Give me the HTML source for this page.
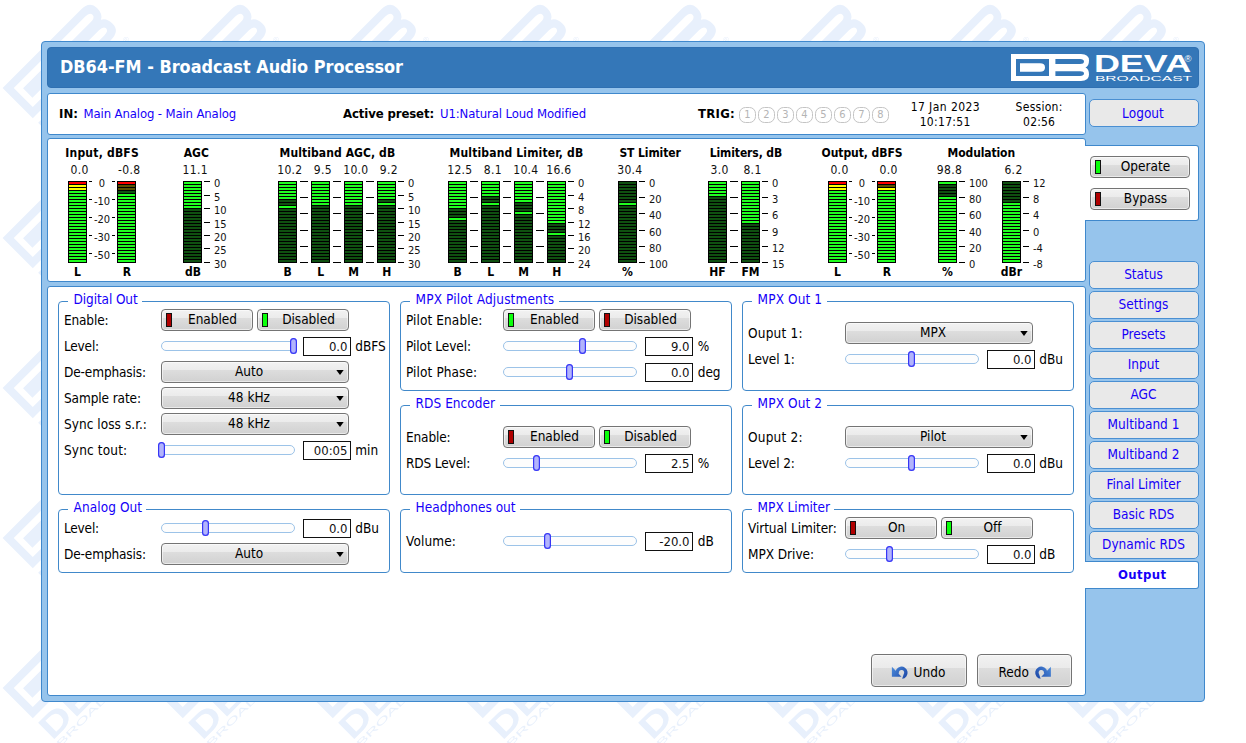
<!DOCTYPE html><html><head><meta charset="utf-8"><title>DB64-FM - Broadcast Audio Processor</title><style>
html,body{margin:0;padding:0;background:#fff}
#r{position:relative;width:1246px;height:743px;overflow:hidden;font-family:'DejaVu Sans Condensed','Liberation Sans',sans-serif;background:#fff}
#r div,#r b,#r span{position:absolute;box-sizing:border-box}
#r span{white-space:nowrap;line-height:20px;height:20px}
.pn{background:#fff;border:1px solid #3f88cc;border-radius:3px}
.tab{background:#fff;border:1px solid #3f88cc;border-left:none;border-radius:0 3px 3px 0}
.nv{width:110px;height:28px;background:#e9e9e9;border:1px solid #4a8fd2;border-radius:5px}
.fs{border:1px solid #4189ca;border-radius:4px}
.lg{height:5px;background:#fff}
.mt{width:19px;height:82px;background:#000}
.mt i{position:absolute;left:1px;width:17px;height:2px}
.tk{height:1px;background:#000}
.tr{width:17px;height:16px;border:1px solid #c4c4c4;border-radius:6.5px;background:#fff}
.bt{border:1px solid #747474;border-radius:4px;background:linear-gradient(#f2f2f2 0,#ebebeb 41%,#dddddd 42%,#d1d1d1 100%);box-shadow:inset 0 0 0 1px rgba(255,255,255,.55)}
.bt u{position:absolute;left:4px;top:3px;width:6px;height:14px;border:1px solid #111;box-sizing:border-box}
.bt s{position:absolute;right:4px;top:8px;width:8px;height:5px;background:#000;clip-path:polygon(0.3px 0,7.7px 0,4px 5px)}
.sl{width:134px;height:10px;border:1px solid #9cc3e8;border-radius:5px;background:#fdfdfd}
.sh{width:7px;height:16px;border-radius:3.5px;background:#b2b4fc;box-shadow:inset 0 0 0 1.2px #3636f6}
.ib{width:48px;height:19px;border:1px solid #111;background:#fff}
</style></head><body><div id="r"><svg style="position:absolute;left:0;top:0" width="1200" height="743" viewBox="0 0 1200 743"><defs><pattern id="wm" width="150" height="150" patternUnits="userSpaceOnUse"><g transform="translate(2.6,88) rotate(-45) scale(1.58)" fill="#e8f0fc"><path fill-rule="evenodd" d="M0,0H70Q78,0 78,6.5Q78,12 74.5,13.5Q78,15 78,20.5Q78,27 70,27H0ZM5,5V22H38V5ZM44.4,5V10H69Q73,10 73,7.5Q73,5 69,5ZM44.4,17.3V22H69Q73,22 73,19.6Q73,17.3 69,17.3Z"/><path d="M9,9.3H29Q34,9.3 34,13.5Q34,17.7 29,17.7H9Z"/><text x="-1.5" y="46" font-family="'Liberation Sans',sans-serif" font-weight="bold" font-size="21" textLength="76" lengthAdjust="spacingAndGlyphs">DEVA</text><text x="75" y="35.5" font-family="'Liberation Sans',sans-serif" font-size="5">®</text><text x="-1" y="52.3" font-family="'Liberation Sans',sans-serif" font-size="5.8" textLength="77" lengthAdjust="spacingAndGlyphs">BROADCAST</text></g></pattern></defs><rect width="1200" height="743" fill="url(#wm)"/></svg>
<div style="left:41px;top:41px;width:1164px;height:661px;background:#96c4ec;border:1px solid #3f88cc;border-radius:4px;box-sizing:border-box"></div>
<div style="left:47px;top:47px;width:1152px;height:41px;background:#3477b8;border:1px solid #2f70b2;border-radius:4px;box-sizing:border-box"></div>
<span style="top:57.12px;font-size:17px;font-weight:bold;color:#fff;left:60.0px;transform:scaleX(1.0506);transform-origin:0 0;">DB64-FM - Broadcast Audio Processor</span>
<svg style="position:absolute;left:1005px;top:48px" width="192" height="39" viewBox="1005 48 192 39"><g transform="translate(1011,54)" fill="#fff"><path fill-rule="evenodd" d="M0,0H70Q78,0 78,6.5Q78,12 74.5,13.5Q78,15 78,20.5Q78,27 70,27H0ZM5,5V22H38V5ZM44.4,5V10H69Q73,10 73,7.5Q73,5 69,5ZM44.4,17.3V22H69Q73,22 73,19.6Q73,17.3 69,17.3Z"/><path d="M9,9.3H29Q34,9.3 34,13.5Q34,17.7 29,17.7H9Z"/></g><text x="1093.9" y="72" fill="#fff" font-family="'Liberation Sans',sans-serif" font-weight="bold" font-size="24" textLength="97.3" lengthAdjust="spacingAndGlyphs">DEVA</text><text x="1184.5" y="62" fill="#fff" font-family="'Liberation Sans',sans-serif" font-size="9.5">®</text><text x="1094.9" y="80.8" fill="#fff" font-family="'Liberation Sans',sans-serif" font-size="6.4" textLength="97.3" lengthAdjust="spacingAndGlyphs">BROADCAST</text></svg>
<div class="pn" style="left:47px;top:93px;width:1039px;height:42px"></div>
<span style="top:103.50px;font-size:13px;font-weight:bold;letter-spacing:0.057px;left:59.0px;">IN:</span>
<span style="top:103.50px;font-size:13px;color:#1600f8;letter-spacing:-0.130px;left:83.6px;">Main Analog - Main Analog</span>
<span style="top:103.50px;font-size:13px;font-weight:bold;letter-spacing:-0.105px;left:343.0px;">Active preset:</span>
<span style="top:103.50px;font-size:13px;color:#1600f8;letter-spacing:-0.113px;left:440.0px;">U1:Natural Loud Modified</span>
<span style="top:103.50px;font-size:13px;font-weight:bold;letter-spacing:0.275px;left:698.0px;">TRIG:</span>
<div class="tr" style="left:739px;top:107px"></div>
<span style="top:105.19px;font-size:11px;color:#b4b4b4;left:747.5px;transform:translateX(-50%);">1</span>
<div class="tr" style="left:758px;top:107px"></div>
<span style="top:105.19px;font-size:11px;color:#b4b4b4;left:766.5px;transform:translateX(-50%);">2</span>
<div class="tr" style="left:777px;top:107px"></div>
<span style="top:105.19px;font-size:11px;color:#b4b4b4;left:785.5px;transform:translateX(-50%);">3</span>
<div class="tr" style="left:796px;top:107px"></div>
<span style="top:105.19px;font-size:11px;color:#b4b4b4;left:804.5px;transform:translateX(-50%);">4</span>
<div class="tr" style="left:815px;top:107px"></div>
<span style="top:105.19px;font-size:11px;color:#b4b4b4;left:823.5px;transform:translateX(-50%);">5</span>
<div class="tr" style="left:834px;top:107px"></div>
<span style="top:105.19px;font-size:11px;color:#b4b4b4;left:842.5px;transform:translateX(-50%);">6</span>
<div class="tr" style="left:853px;top:107px"></div>
<span style="top:105.19px;font-size:11px;color:#b4b4b4;left:861.5px;transform:translateX(-50%);">7</span>
<div class="tr" style="left:872px;top:107px"></div>
<span style="top:105.19px;font-size:11px;color:#b4b4b4;left:880.5px;transform:translateX(-50%);">8</span>
<span style="top:96.85px;font-size:12px;letter-spacing:0.436px;left:945.4px;transform:translateX(-50%);">17 Jan 2023</span>
<span style="top:111.85px;font-size:12px;letter-spacing:0.314px;left:945.2px;transform:translateX(-50%);">10:17:51</span>
<span style="top:96.85px;font-size:12px;letter-spacing:0.270px;left:1039.1px;transform:translateX(-50%);">Session:</span>
<span style="top:111.85px;font-size:12px;letter-spacing:0.178px;left:1039.1px;transform:translateX(-50%);">02:56</span>
<div class="nv" style="left:1089px;top:99px"></div>
<span style="top:103.33px;font-size:13.5px;color:#1600f8;letter-spacing:0.040px;left:1143.0px;transform:translateX(-50%);">Logout</span>
<div class="pn" style="left:47px;top:138px;width:1039px;height:144px"></div>
<div class="tab" style="left:1085px;top:145px;width:114px;height:76px"></div>
<div class="bt" style="left:1090px;top:156px;width:100px;height:22px"><u style="background:#0aff0a"></u></div>
<span style="top:156.33px;font-size:13.5px;letter-spacing:-0.007px;left:1145.5px;transform:translateX(-50%);">Operate</span>
<div class="bt" style="left:1090px;top:188px;width:100px;height:22px"><u style="background:#b00000"></u></div>
<span style="top:188.33px;font-size:13.5px;letter-spacing:-0.007px;left:1145.5px;transform:translateX(-50%);">Bypass</span>
<span style="top:142.85px;font-size:12px;font-weight:bold;letter-spacing:0.223px;left:102.1px;transform:translateX(-50%);">Input, dBFS</span>
<span style="top:159.85px;font-size:12px;color:#111;letter-spacing:0.330px;left:79.7px;transform:translateX(-50%);">0.0</span>
<span style="top:159.85px;font-size:12px;color:#111;letter-spacing:0.330px;left:129.2px;transform:translateX(-50%);">-0.8</span>
<div class="mt" style="left:68px;top:181px"><i style="top:1px;background:#ff0000"></i><i style="top:4px;background:#ffff00"></i><i style="top:7px;background:#ffff00"></i><i style="top:10px;background:#20ff20"></i><i style="top:13px;background:#20ff20"></i><i style="top:16px;background:#20ff20"></i><i style="top:19px;background:#20ff20"></i><i style="top:22px;background:#20ff20"></i><i style="top:25px;background:#20ff20"></i><i style="top:28px;background:#20ff20"></i><i style="top:31px;background:#20ff20"></i><i style="top:34px;background:#20ff20"></i><i style="top:37px;background:#20ff20"></i><i style="top:40px;background:#20ff20"></i><i style="top:43px;background:#20ff20"></i><i style="top:46px;background:#20ff20"></i><i style="top:49px;background:#20ff20"></i><i style="top:52px;background:#20ff20"></i><i style="top:55px;background:#20ff20"></i><i style="top:58px;background:#20ff20"></i><i style="top:61px;background:#20ff20"></i><i style="top:64px;background:#20ff20"></i><i style="top:67px;background:#20ff20"></i><i style="top:70px;background:#20ff20"></i><i style="top:73px;background:#20ff20"></i><i style="top:76px;background:#20ff20"></i><i style="top:79px;background:#20ff20"></i></div>
<div class="mt" style="left:117px;top:181px"><i style="top:1px;background:#ff0000"></i><i style="top:4px;background:#5a5000"></i><i style="top:7px;background:#5a5000"></i><i style="top:10px;background:#0f5010"></i><i style="top:13px;background:#20ff20"></i><i style="top:16px;background:#20ff20"></i><i style="top:19px;background:#20ff20"></i><i style="top:22px;background:#20ff20"></i><i style="top:25px;background:#20ff20"></i><i style="top:28px;background:#20ff20"></i><i style="top:31px;background:#20ff20"></i><i style="top:34px;background:#20ff20"></i><i style="top:37px;background:#20ff20"></i><i style="top:40px;background:#20ff20"></i><i style="top:43px;background:#20ff20"></i><i style="top:46px;background:#20ff20"></i><i style="top:49px;background:#20ff20"></i><i style="top:52px;background:#20ff20"></i><i style="top:55px;background:#20ff20"></i><i style="top:58px;background:#20ff20"></i><i style="top:61px;background:#20ff20"></i><i style="top:64px;background:#20ff20"></i><i style="top:67px;background:#20ff20"></i><i style="top:70px;background:#20ff20"></i><i style="top:73px;background:#20ff20"></i><i style="top:76px;background:#20ff20"></i><i style="top:79px;background:#20ff20"></i></div>
<b class="tk" style="left:89px;top:181px;width:3px"></b>
<b class="tk" style="left:89px;top:199px;width:3px"></b>
<b class="tk" style="left:89px;top:217px;width:3px"></b>
<b class="tk" style="left:89px;top:235px;width:3px"></b>
<b class="tk" style="left:89px;top:253px;width:3px"></b>
<b class="tk" style="left:112px;top:181px;width:3px"></b>
<b class="tk" style="left:112px;top:199px;width:3px"></b>
<b class="tk" style="left:112px;top:217px;width:3px"></b>
<b class="tk" style="left:112px;top:235px;width:3px"></b>
<b class="tk" style="left:112px;top:253px;width:3px"></b>
<span style="top:174.19px;font-size:11px;color:#111;left:102.0px;transform:translateX(-50%);">0</span>
<span style="top:192.19px;font-size:11px;color:#111;left:102.0px;transform:translateX(-50%);">-10</span>
<span style="top:210.19px;font-size:11px;color:#111;left:102.0px;transform:translateX(-50%);">-20</span>
<span style="top:228.19px;font-size:11px;color:#111;left:102.0px;transform:translateX(-50%);">-30</span>
<span style="top:246.19px;font-size:11px;color:#111;left:102.0px;transform:translateX(-50%);">-50</span>
<span style="top:261.85px;font-size:12px;font-weight:bold;letter-spacing:0.009px;left:77.5px;transform:translateX(-50%);">L</span>
<span style="top:261.85px;font-size:12px;font-weight:bold;letter-spacing:0.009px;left:127.0px;transform:translateX(-50%);">R</span>
<span style="top:142.85px;font-size:12px;font-weight:bold;letter-spacing:-0.047px;left:183.8px;">AGC</span>
<span style="top:159.85px;font-size:12px;color:#111;letter-spacing:0.330px;left:195.2px;transform:translateX(-50%);">11.1</span>
<div class="mt" style="left:183px;top:181px"><i style="top:1px;background:#20ff20"></i><i style="top:4px;background:#20ff20"></i><i style="top:7px;background:#20ff20"></i><i style="top:10px;background:#20ff20"></i><i style="top:13px;background:#20ff20"></i><i style="top:16px;background:#20ff20"></i><i style="top:19px;background:#20ff20"></i><i style="top:22px;background:#20ff20"></i><i style="top:25px;background:#20ff20"></i><i style="top:28px;background:#0f5010"></i><i style="top:31px;background:#0f5010"></i><i style="top:34px;background:#0f5010"></i><i style="top:37px;background:#0f5010"></i><i style="top:40px;background:#0f5010"></i><i style="top:43px;background:#0f5010"></i><i style="top:46px;background:#0f5010"></i><i style="top:49px;background:#0f5010"></i><i style="top:52px;background:#0f5010"></i><i style="top:55px;background:#0f5010"></i><i style="top:58px;background:#0f5010"></i><i style="top:61px;background:#0f5010"></i><i style="top:64px;background:#0f5010"></i><i style="top:67px;background:#0f5010"></i><i style="top:70px;background:#0f5010"></i><i style="top:73px;background:#0f5010"></i><i style="top:76px;background:#0f5010"></i><i style="top:79px;background:#0f5010"></i></div>
<b class="tk" style="left:204px;top:181px;width:6px"></b>
<b class="tk" style="left:204px;top:195px;width:6px"></b>
<b class="tk" style="left:204px;top:208px;width:6px"></b>
<b class="tk" style="left:204px;top:222px;width:6px"></b>
<b class="tk" style="left:204px;top:235px;width:6px"></b>
<b class="tk" style="left:204px;top:248px;width:6px"></b>
<b class="tk" style="left:204px;top:262px;width:6px"></b>
<span style="top:174.19px;font-size:11px;color:#111;left:214.0px;">0</span>
<span style="top:188.19px;font-size:11px;color:#111;left:214.0px;">5</span>
<span style="top:201.19px;font-size:11px;color:#111;left:214.0px;">10</span>
<span style="top:215.19px;font-size:11px;color:#111;left:214.0px;">15</span>
<span style="top:228.19px;font-size:11px;color:#111;left:214.0px;">20</span>
<span style="top:241.19px;font-size:11px;color:#111;left:214.0px;">25</span>
<span style="top:255.19px;font-size:11px;color:#111;left:214.0px;">30</span>
<span style="top:261.85px;font-size:12px;font-weight:bold;letter-spacing:0.009px;left:193.0px;transform:translateX(-50%);">dB</span>
<span style="top:142.85px;font-size:12px;font-weight:bold;letter-spacing:0.087px;left:279.6px;">Multiband AGC, dB</span>
<span style="top:159.85px;font-size:12px;color:#111;letter-spacing:0.330px;left:289.9px;transform:translateX(-50%);">10.2</span>
<div class="mt" style="left:278px;top:181px"><i style="top:1px;background:#20ff20"></i><i style="top:4px;background:#20ff20"></i><i style="top:7px;background:#20ff20"></i><i style="top:10px;background:#20ff20"></i><i style="top:13px;background:#20ff20"></i><i style="top:16px;background:#20ff20"></i><i style="top:19px;background:#0f5010"></i><i style="top:22px;background:#0f5010"></i><i style="top:25px;background:#20ff20"></i><i style="top:28px;background:#0f5010"></i><i style="top:31px;background:#0f5010"></i><i style="top:34px;background:#0f5010"></i><i style="top:37px;background:#0f5010"></i><i style="top:40px;background:#0f5010"></i><i style="top:43px;background:#0f5010"></i><i style="top:46px;background:#0f5010"></i><i style="top:49px;background:#0f5010"></i><i style="top:52px;background:#0f5010"></i><i style="top:55px;background:#0f5010"></i><i style="top:58px;background:#0f5010"></i><i style="top:61px;background:#0f5010"></i><i style="top:64px;background:#0f5010"></i><i style="top:67px;background:#0f5010"></i><i style="top:70px;background:#0f5010"></i><i style="top:73px;background:#0f5010"></i><i style="top:76px;background:#0f5010"></i><i style="top:79px;background:#0f5010"></i></div>
<span style="top:261.85px;font-size:12px;font-weight:bold;letter-spacing:0.009px;left:287.7px;transform:translateX(-50%);">B</span>
<b class="tk" style="left:300px;top:181px;width:8px"></b>
<b class="tk" style="left:300px;top:197px;width:8px"></b>
<b class="tk" style="left:300px;top:213px;width:8px"></b>
<b class="tk" style="left:300px;top:230px;width:8px"></b>
<b class="tk" style="left:300px;top:246px;width:8px"></b>
<b class="tk" style="left:300px;top:262px;width:8px"></b>
<span style="top:159.85px;font-size:12px;color:#111;letter-spacing:0.330px;left:322.9px;transform:translateX(-50%);">9.5</span>
<div class="mt" style="left:311px;top:181px"><i style="top:1px;background:#20ff20"></i><i style="top:4px;background:#20ff20"></i><i style="top:7px;background:#20ff20"></i><i style="top:10px;background:#20ff20"></i><i style="top:13px;background:#20ff20"></i><i style="top:16px;background:#20ff20"></i><i style="top:19px;background:#20ff20"></i><i style="top:22px;background:#20ff20"></i><i style="top:25px;background:#0f5010"></i><i style="top:28px;background:#0f5010"></i><i style="top:31px;background:#0f5010"></i><i style="top:34px;background:#0f5010"></i><i style="top:37px;background:#0f5010"></i><i style="top:40px;background:#0f5010"></i><i style="top:43px;background:#0f5010"></i><i style="top:46px;background:#0f5010"></i><i style="top:49px;background:#0f5010"></i><i style="top:52px;background:#0f5010"></i><i style="top:55px;background:#0f5010"></i><i style="top:58px;background:#0f5010"></i><i style="top:61px;background:#0f5010"></i><i style="top:64px;background:#0f5010"></i><i style="top:67px;background:#0f5010"></i><i style="top:70px;background:#0f5010"></i><i style="top:73px;background:#0f5010"></i><i style="top:76px;background:#0f5010"></i><i style="top:79px;background:#0f5010"></i></div>
<span style="top:261.85px;font-size:12px;font-weight:bold;letter-spacing:0.009px;left:320.7px;transform:translateX(-50%);">L</span>
<b class="tk" style="left:333px;top:181px;width:8px"></b>
<b class="tk" style="left:333px;top:197px;width:8px"></b>
<b class="tk" style="left:333px;top:213px;width:8px"></b>
<b class="tk" style="left:333px;top:230px;width:8px"></b>
<b class="tk" style="left:333px;top:246px;width:8px"></b>
<b class="tk" style="left:333px;top:262px;width:8px"></b>
<span style="top:159.85px;font-size:12px;color:#111;letter-spacing:0.330px;left:355.9px;transform:translateX(-50%);">10.0</span>
<div class="mt" style="left:344px;top:181px"><i style="top:1px;background:#20ff20"></i><i style="top:4px;background:#20ff20"></i><i style="top:7px;background:#20ff20"></i><i style="top:10px;background:#20ff20"></i><i style="top:13px;background:#20ff20"></i><i style="top:16px;background:#20ff20"></i><i style="top:19px;background:#20ff20"></i><i style="top:22px;background:#20ff20"></i><i style="top:25px;background:#0f5010"></i><i style="top:28px;background:#0f5010"></i><i style="top:31px;background:#0f5010"></i><i style="top:34px;background:#0f5010"></i><i style="top:37px;background:#0f5010"></i><i style="top:40px;background:#0f5010"></i><i style="top:43px;background:#0f5010"></i><i style="top:46px;background:#0f5010"></i><i style="top:49px;background:#0f5010"></i><i style="top:52px;background:#0f5010"></i><i style="top:55px;background:#0f5010"></i><i style="top:58px;background:#0f5010"></i><i style="top:61px;background:#0f5010"></i><i style="top:64px;background:#0f5010"></i><i style="top:67px;background:#0f5010"></i><i style="top:70px;background:#0f5010"></i><i style="top:73px;background:#0f5010"></i><i style="top:76px;background:#0f5010"></i><i style="top:79px;background:#0f5010"></i></div>
<span style="top:261.85px;font-size:12px;font-weight:bold;letter-spacing:0.009px;left:353.7px;transform:translateX(-50%);">M</span>
<b class="tk" style="left:366px;top:181px;width:8px"></b>
<b class="tk" style="left:366px;top:197px;width:8px"></b>
<b class="tk" style="left:366px;top:213px;width:8px"></b>
<b class="tk" style="left:366px;top:230px;width:8px"></b>
<b class="tk" style="left:366px;top:246px;width:8px"></b>
<b class="tk" style="left:366px;top:262px;width:8px"></b>
<span style="top:159.85px;font-size:12px;color:#111;letter-spacing:0.330px;left:388.9px;transform:translateX(-50%);">9.2</span>
<div class="mt" style="left:377px;top:181px"><i style="top:1px;background:#20ff20"></i><i style="top:4px;background:#20ff20"></i><i style="top:7px;background:#20ff20"></i><i style="top:10px;background:#20ff20"></i><i style="top:13px;background:#20ff20"></i><i style="top:16px;background:#20ff20"></i><i style="top:19px;background:#0f5010"></i><i style="top:22px;background:#20ff20"></i><i style="top:25px;background:#0f5010"></i><i style="top:28px;background:#0f5010"></i><i style="top:31px;background:#0f5010"></i><i style="top:34px;background:#0f5010"></i><i style="top:37px;background:#0f5010"></i><i style="top:40px;background:#0f5010"></i><i style="top:43px;background:#0f5010"></i><i style="top:46px;background:#0f5010"></i><i style="top:49px;background:#0f5010"></i><i style="top:52px;background:#0f5010"></i><i style="top:55px;background:#0f5010"></i><i style="top:58px;background:#0f5010"></i><i style="top:61px;background:#0f5010"></i><i style="top:64px;background:#0f5010"></i><i style="top:67px;background:#0f5010"></i><i style="top:70px;background:#0f5010"></i><i style="top:73px;background:#0f5010"></i><i style="top:76px;background:#0f5010"></i><i style="top:79px;background:#0f5010"></i></div>
<span style="top:261.85px;font-size:12px;font-weight:bold;letter-spacing:0.009px;left:386.7px;transform:translateX(-50%);">H</span>
<b class="tk" style="left:398px;top:181px;width:6px"></b>
<b class="tk" style="left:398px;top:195px;width:6px"></b>
<b class="tk" style="left:398px;top:208px;width:6px"></b>
<b class="tk" style="left:398px;top:222px;width:6px"></b>
<b class="tk" style="left:398px;top:235px;width:6px"></b>
<b class="tk" style="left:398px;top:248px;width:6px"></b>
<b class="tk" style="left:398px;top:262px;width:6px"></b>
<span style="top:174.19px;font-size:11px;color:#111;left:408.0px;">0</span>
<span style="top:188.19px;font-size:11px;color:#111;left:408.0px;">5</span>
<span style="top:201.19px;font-size:11px;color:#111;left:408.0px;">10</span>
<span style="top:215.19px;font-size:11px;color:#111;left:408.0px;">15</span>
<span style="top:228.19px;font-size:11px;color:#111;left:408.0px;">20</span>
<span style="top:241.19px;font-size:11px;color:#111;left:408.0px;">25</span>
<span style="top:255.19px;font-size:11px;color:#111;left:408.0px;">30</span>
<span style="top:142.85px;font-size:12px;font-weight:bold;letter-spacing:0.149px;left:449.6px;">Multiband Limiter, dB</span>
<span style="top:159.85px;font-size:12px;color:#111;letter-spacing:0.330px;left:459.9px;transform:translateX(-50%);">12.5</span>
<div class="mt" style="left:448px;top:181px"><i style="top:1px;background:#20ff20"></i><i style="top:4px;background:#20ff20"></i><i style="top:7px;background:#20ff20"></i><i style="top:10px;background:#20ff20"></i><i style="top:13px;background:#20ff20"></i><i style="top:16px;background:#20ff20"></i><i style="top:19px;background:#20ff20"></i><i style="top:22px;background:#20ff20"></i><i style="top:25px;background:#20ff20"></i><i style="top:28px;background:#0f5010"></i><i style="top:31px;background:#0f5010"></i><i style="top:34px;background:#0f5010"></i><i style="top:37px;background:#20ff20"></i><i style="top:40px;background:#0f5010"></i><i style="top:43px;background:#0f5010"></i><i style="top:46px;background:#0f5010"></i><i style="top:49px;background:#0f5010"></i><i style="top:52px;background:#0f5010"></i><i style="top:55px;background:#0f5010"></i><i style="top:58px;background:#0f5010"></i><i style="top:61px;background:#0f5010"></i><i style="top:64px;background:#0f5010"></i><i style="top:67px;background:#0f5010"></i><i style="top:70px;background:#0f5010"></i><i style="top:73px;background:#0f5010"></i><i style="top:76px;background:#0f5010"></i><i style="top:79px;background:#0f5010"></i></div>
<span style="top:261.85px;font-size:12px;font-weight:bold;letter-spacing:0.009px;left:457.7px;transform:translateX(-50%);">B</span>
<b class="tk" style="left:470px;top:181px;width:8px"></b>
<b class="tk" style="left:470px;top:197px;width:8px"></b>
<b class="tk" style="left:470px;top:213px;width:8px"></b>
<b class="tk" style="left:470px;top:230px;width:8px"></b>
<b class="tk" style="left:470px;top:246px;width:8px"></b>
<b class="tk" style="left:470px;top:262px;width:8px"></b>
<span style="top:159.85px;font-size:12px;color:#111;letter-spacing:0.330px;left:492.9px;transform:translateX(-50%);">8.1</span>
<div class="mt" style="left:481px;top:181px"><i style="top:1px;background:#20ff20"></i><i style="top:4px;background:#20ff20"></i><i style="top:7px;background:#20ff20"></i><i style="top:10px;background:#20ff20"></i><i style="top:13px;background:#20ff20"></i><i style="top:16px;background:#0f5010"></i><i style="top:19px;background:#0f5010"></i><i style="top:22px;background:#20ff20"></i><i style="top:25px;background:#0f5010"></i><i style="top:28px;background:#0f5010"></i><i style="top:31px;background:#0f5010"></i><i style="top:34px;background:#0f5010"></i><i style="top:37px;background:#0f5010"></i><i style="top:40px;background:#0f5010"></i><i style="top:43px;background:#0f5010"></i><i style="top:46px;background:#0f5010"></i><i style="top:49px;background:#0f5010"></i><i style="top:52px;background:#0f5010"></i><i style="top:55px;background:#0f5010"></i><i style="top:58px;background:#0f5010"></i><i style="top:61px;background:#0f5010"></i><i style="top:64px;background:#0f5010"></i><i style="top:67px;background:#0f5010"></i><i style="top:70px;background:#0f5010"></i><i style="top:73px;background:#0f5010"></i><i style="top:76px;background:#0f5010"></i><i style="top:79px;background:#0f5010"></i></div>
<span style="top:261.85px;font-size:12px;font-weight:bold;letter-spacing:0.009px;left:490.7px;transform:translateX(-50%);">L</span>
<b class="tk" style="left:503px;top:181px;width:8px"></b>
<b class="tk" style="left:503px;top:197px;width:8px"></b>
<b class="tk" style="left:503px;top:213px;width:8px"></b>
<b class="tk" style="left:503px;top:230px;width:8px"></b>
<b class="tk" style="left:503px;top:246px;width:8px"></b>
<b class="tk" style="left:503px;top:262px;width:8px"></b>
<span style="top:159.85px;font-size:12px;color:#111;letter-spacing:0.330px;left:525.9px;transform:translateX(-50%);">10.4</span>
<div class="mt" style="left:514px;top:181px"><i style="top:1px;background:#20ff20"></i><i style="top:4px;background:#20ff20"></i><i style="top:7px;background:#20ff20"></i><i style="top:10px;background:#20ff20"></i><i style="top:13px;background:#20ff20"></i><i style="top:16px;background:#20ff20"></i><i style="top:19px;background:#20ff20"></i><i style="top:22px;background:#0f5010"></i><i style="top:25px;background:#0f5010"></i><i style="top:28px;background:#0f5010"></i><i style="top:31px;background:#20ff20"></i><i style="top:34px;background:#0f5010"></i><i style="top:37px;background:#0f5010"></i><i style="top:40px;background:#0f5010"></i><i style="top:43px;background:#0f5010"></i><i style="top:46px;background:#0f5010"></i><i style="top:49px;background:#0f5010"></i><i style="top:52px;background:#0f5010"></i><i style="top:55px;background:#0f5010"></i><i style="top:58px;background:#0f5010"></i><i style="top:61px;background:#0f5010"></i><i style="top:64px;background:#0f5010"></i><i style="top:67px;background:#0f5010"></i><i style="top:70px;background:#0f5010"></i><i style="top:73px;background:#0f5010"></i><i style="top:76px;background:#0f5010"></i><i style="top:79px;background:#0f5010"></i></div>
<span style="top:261.85px;font-size:12px;font-weight:bold;letter-spacing:0.009px;left:523.7px;transform:translateX(-50%);">M</span>
<b class="tk" style="left:536px;top:181px;width:8px"></b>
<b class="tk" style="left:536px;top:197px;width:8px"></b>
<b class="tk" style="left:536px;top:213px;width:8px"></b>
<b class="tk" style="left:536px;top:230px;width:8px"></b>
<b class="tk" style="left:536px;top:246px;width:8px"></b>
<b class="tk" style="left:536px;top:262px;width:8px"></b>
<span style="top:159.85px;font-size:12px;color:#111;letter-spacing:0.330px;left:558.9px;transform:translateX(-50%);">16.6</span>
<div class="mt" style="left:547px;top:181px"><i style="top:1px;background:#20ff20"></i><i style="top:4px;background:#20ff20"></i><i style="top:7px;background:#20ff20"></i><i style="top:10px;background:#20ff20"></i><i style="top:13px;background:#20ff20"></i><i style="top:16px;background:#20ff20"></i><i style="top:19px;background:#20ff20"></i><i style="top:22px;background:#20ff20"></i><i style="top:25px;background:#20ff20"></i><i style="top:28px;background:#20ff20"></i><i style="top:31px;background:#20ff20"></i><i style="top:34px;background:#20ff20"></i><i style="top:37px;background:#20ff20"></i><i style="top:40px;background:#20ff20"></i><i style="top:43px;background:#0f5010"></i><i style="top:46px;background:#0f5010"></i><i style="top:49px;background:#0f5010"></i><i style="top:52px;background:#20ff20"></i><i style="top:55px;background:#0f5010"></i><i style="top:58px;background:#0f5010"></i><i style="top:61px;background:#0f5010"></i><i style="top:64px;background:#0f5010"></i><i style="top:67px;background:#0f5010"></i><i style="top:70px;background:#0f5010"></i><i style="top:73px;background:#0f5010"></i><i style="top:76px;background:#0f5010"></i><i style="top:79px;background:#0f5010"></i></div>
<span style="top:261.85px;font-size:12px;font-weight:bold;letter-spacing:0.009px;left:556.7px;transform:translateX(-50%);">H</span>
<b class="tk" style="left:568px;top:181px;width:6px"></b>
<b class="tk" style="left:568px;top:195px;width:6px"></b>
<b class="tk" style="left:568px;top:208px;width:6px"></b>
<b class="tk" style="left:568px;top:222px;width:6px"></b>
<b class="tk" style="left:568px;top:235px;width:6px"></b>
<b class="tk" style="left:568px;top:248px;width:6px"></b>
<b class="tk" style="left:568px;top:262px;width:6px"></b>
<span style="top:174.19px;font-size:11px;color:#111;left:578.0px;">0</span>
<span style="top:188.19px;font-size:11px;color:#111;left:578.0px;">4</span>
<span style="top:201.19px;font-size:11px;color:#111;left:578.0px;">8</span>
<span style="top:215.19px;font-size:11px;color:#111;left:578.0px;">12</span>
<span style="top:228.19px;font-size:11px;color:#111;left:578.0px;">16</span>
<span style="top:241.19px;font-size:11px;color:#111;left:578.0px;">20</span>
<span style="top:255.19px;font-size:11px;color:#111;left:578.0px;">24</span>
<span style="top:142.85px;font-size:12px;font-weight:bold;letter-spacing:-0.083px;left:619.4px;">ST Limiter</span>
<span style="top:159.85px;font-size:12px;color:#111;letter-spacing:0.330px;left:629.9px;transform:translateX(-50%);">30.4</span>
<div class="mt" style="left:618px;top:181px"><i style="top:1px;background:#0f5010"></i><i style="top:4px;background:#0f5010"></i><i style="top:7px;background:#0f5010"></i><i style="top:10px;background:#0f5010"></i><i style="top:13px;background:#0f5010"></i><i style="top:16px;background:#0f5010"></i><i style="top:19px;background:#0f5010"></i><i style="top:22px;background:#20ff20"></i><i style="top:25px;background:#0f5010"></i><i style="top:28px;background:#0f5010"></i><i style="top:31px;background:#0f5010"></i><i style="top:34px;background:#0f5010"></i><i style="top:37px;background:#0f5010"></i><i style="top:40px;background:#0f5010"></i><i style="top:43px;background:#0f5010"></i><i style="top:46px;background:#0f5010"></i><i style="top:49px;background:#0f5010"></i><i style="top:52px;background:#0f5010"></i><i style="top:55px;background:#0f5010"></i><i style="top:58px;background:#0f5010"></i><i style="top:61px;background:#0f5010"></i><i style="top:64px;background:#0f5010"></i><i style="top:67px;background:#0f5010"></i><i style="top:70px;background:#0f5010"></i><i style="top:73px;background:#0f5010"></i><i style="top:76px;background:#0f5010"></i><i style="top:79px;background:#0f5010"></i></div>
<b class="tk" style="left:639px;top:181px;width:6px"></b>
<b class="tk" style="left:639px;top:197px;width:6px"></b>
<b class="tk" style="left:639px;top:213px;width:6px"></b>
<b class="tk" style="left:639px;top:230px;width:6px"></b>
<b class="tk" style="left:639px;top:246px;width:6px"></b>
<b class="tk" style="left:639px;top:262px;width:6px"></b>
<span style="top:174.19px;font-size:11px;color:#111;left:649.0px;">0</span>
<span style="top:190.19px;font-size:11px;color:#111;left:649.0px;">20</span>
<span style="top:206.19px;font-size:11px;color:#111;left:649.0px;">40</span>
<span style="top:223.19px;font-size:11px;color:#111;left:649.0px;">60</span>
<span style="top:239.19px;font-size:11px;color:#111;left:649.0px;">80</span>
<span style="top:255.19px;font-size:11px;color:#111;left:649.0px;">100</span>
<span style="top:261.85px;font-size:12px;font-weight:bold;letter-spacing:0.009px;left:627.5px;transform:translateX(-50%);">%</span>
<span style="top:142.85px;font-size:12px;font-weight:bold;letter-spacing:-0.098px;left:709.7px;">Limiters, dB</span>
<span style="top:159.85px;font-size:12px;color:#111;letter-spacing:0.330px;left:719.7px;transform:translateX(-50%);">3.0</span>
<span style="top:159.85px;font-size:12px;color:#111;letter-spacing:0.330px;left:752.5px;transform:translateX(-50%);">8.1</span>
<div class="mt" style="left:708px;top:181px"><i style="top:1px;background:#20ff20"></i><i style="top:4px;background:#20ff20"></i><i style="top:7px;background:#20ff20"></i><i style="top:10px;background:#20ff20"></i><i style="top:13px;background:#20ff20"></i><i style="top:16px;background:#0f5010"></i><i style="top:19px;background:#0f5010"></i><i style="top:22px;background:#0f5010"></i><i style="top:25px;background:#0f5010"></i><i style="top:28px;background:#0f5010"></i><i style="top:31px;background:#0f5010"></i><i style="top:34px;background:#0f5010"></i><i style="top:37px;background:#0f5010"></i><i style="top:40px;background:#0f5010"></i><i style="top:43px;background:#0f5010"></i><i style="top:46px;background:#0f5010"></i><i style="top:49px;background:#0f5010"></i><i style="top:52px;background:#0f5010"></i><i style="top:55px;background:#0f5010"></i><i style="top:58px;background:#0f5010"></i><i style="top:61px;background:#0f5010"></i><i style="top:64px;background:#0f5010"></i><i style="top:67px;background:#0f5010"></i><i style="top:70px;background:#0f5010"></i><i style="top:73px;background:#0f5010"></i><i style="top:76px;background:#0f5010"></i><i style="top:79px;background:#0f5010"></i></div>
<div class="mt" style="left:741px;top:181px"><i style="top:1px;background:#20ff20"></i><i style="top:4px;background:#20ff20"></i><i style="top:7px;background:#20ff20"></i><i style="top:10px;background:#20ff20"></i><i style="top:13px;background:#20ff20"></i><i style="top:16px;background:#20ff20"></i><i style="top:19px;background:#20ff20"></i><i style="top:22px;background:#20ff20"></i><i style="top:25px;background:#20ff20"></i><i style="top:28px;background:#20ff20"></i><i style="top:31px;background:#20ff20"></i><i style="top:34px;background:#20ff20"></i><i style="top:37px;background:#20ff20"></i><i style="top:40px;background:#20ff20"></i><i style="top:43px;background:#0f5010"></i><i style="top:46px;background:#0f5010"></i><i style="top:49px;background:#0f5010"></i><i style="top:52px;background:#0f5010"></i><i style="top:55px;background:#0f5010"></i><i style="top:58px;background:#0f5010"></i><i style="top:61px;background:#0f5010"></i><i style="top:64px;background:#0f5010"></i><i style="top:67px;background:#0f5010"></i><i style="top:70px;background:#0f5010"></i><i style="top:73px;background:#0f5010"></i><i style="top:76px;background:#0f5010"></i><i style="top:79px;background:#0f5010"></i></div>
<b class="tk" style="left:730px;top:181px;width:8px"></b>
<b class="tk" style="left:730px;top:197px;width:8px"></b>
<b class="tk" style="left:730px;top:213px;width:8px"></b>
<b class="tk" style="left:730px;top:230px;width:8px"></b>
<b class="tk" style="left:730px;top:246px;width:8px"></b>
<b class="tk" style="left:730px;top:262px;width:8px"></b>
<b class="tk" style="left:762px;top:181px;width:6px"></b>
<b class="tk" style="left:762px;top:197px;width:6px"></b>
<b class="tk" style="left:762px;top:213px;width:6px"></b>
<b class="tk" style="left:762px;top:230px;width:6px"></b>
<b class="tk" style="left:762px;top:246px;width:6px"></b>
<b class="tk" style="left:762px;top:262px;width:6px"></b>
<span style="top:174.19px;font-size:11px;color:#111;left:772.0px;">0</span>
<span style="top:190.19px;font-size:11px;color:#111;left:772.0px;">3</span>
<span style="top:206.19px;font-size:11px;color:#111;left:772.0px;">6</span>
<span style="top:223.19px;font-size:11px;color:#111;left:772.0px;">9</span>
<span style="top:239.19px;font-size:11px;color:#111;left:772.0px;">12</span>
<span style="top:255.19px;font-size:11px;color:#111;left:772.0px;">15</span>
<span style="top:261.85px;font-size:12px;font-weight:bold;letter-spacing:0.009px;left:717.5px;transform:translateX(-50%);">HF</span>
<span style="top:261.85px;font-size:12px;font-weight:bold;letter-spacing:0.009px;left:750.5px;transform:translateX(-50%);">FM</span>
<span style="top:142.85px;font-size:12px;font-weight:bold;letter-spacing:-0.048px;left:862.0px;transform:translateX(-50%);">Output, dBFS</span>
<span style="top:159.85px;font-size:12px;color:#111;letter-spacing:0.330px;left:839.5px;transform:translateX(-50%);">0.0</span>
<span style="top:159.85px;font-size:12px;color:#111;letter-spacing:0.330px;left:888.6px;transform:translateX(-50%);">0.0</span>
<div class="mt" style="left:828px;top:181px"><i style="top:1px;background:#ff0000"></i><i style="top:4px;background:#ffff00"></i><i style="top:7px;background:#ffff00"></i><i style="top:10px;background:#20ff20"></i><i style="top:13px;background:#20ff20"></i><i style="top:16px;background:#20ff20"></i><i style="top:19px;background:#20ff20"></i><i style="top:22px;background:#20ff20"></i><i style="top:25px;background:#20ff20"></i><i style="top:28px;background:#20ff20"></i><i style="top:31px;background:#20ff20"></i><i style="top:34px;background:#20ff20"></i><i style="top:37px;background:#20ff20"></i><i style="top:40px;background:#20ff20"></i><i style="top:43px;background:#20ff20"></i><i style="top:46px;background:#20ff20"></i><i style="top:49px;background:#20ff20"></i><i style="top:52px;background:#20ff20"></i><i style="top:55px;background:#20ff20"></i><i style="top:58px;background:#20ff20"></i><i style="top:61px;background:#20ff20"></i><i style="top:64px;background:#20ff20"></i><i style="top:67px;background:#20ff20"></i><i style="top:70px;background:#20ff20"></i><i style="top:73px;background:#20ff20"></i><i style="top:76px;background:#20ff20"></i><i style="top:79px;background:#20ff20"></i></div>
<div class="mt" style="left:877px;top:181px"><i style="top:1px;background:#ff0000"></i><i style="top:4px;background:#5a5000"></i><i style="top:7px;background:#ffff00"></i><i style="top:10px;background:#20ff20"></i><i style="top:13px;background:#20ff20"></i><i style="top:16px;background:#20ff20"></i><i style="top:19px;background:#20ff20"></i><i style="top:22px;background:#20ff20"></i><i style="top:25px;background:#20ff20"></i><i style="top:28px;background:#20ff20"></i><i style="top:31px;background:#20ff20"></i><i style="top:34px;background:#20ff20"></i><i style="top:37px;background:#20ff20"></i><i style="top:40px;background:#20ff20"></i><i style="top:43px;background:#20ff20"></i><i style="top:46px;background:#20ff20"></i><i style="top:49px;background:#20ff20"></i><i style="top:52px;background:#20ff20"></i><i style="top:55px;background:#20ff20"></i><i style="top:58px;background:#20ff20"></i><i style="top:61px;background:#20ff20"></i><i style="top:64px;background:#20ff20"></i><i style="top:67px;background:#20ff20"></i><i style="top:70px;background:#20ff20"></i><i style="top:73px;background:#20ff20"></i><i style="top:76px;background:#20ff20"></i><i style="top:79px;background:#20ff20"></i></div>
<b class="tk" style="left:849px;top:181px;width:3px"></b>
<b class="tk" style="left:849px;top:199px;width:3px"></b>
<b class="tk" style="left:849px;top:217px;width:3px"></b>
<b class="tk" style="left:849px;top:235px;width:3px"></b>
<b class="tk" style="left:849px;top:253px;width:3px"></b>
<b class="tk" style="left:872px;top:181px;width:3px"></b>
<b class="tk" style="left:872px;top:199px;width:3px"></b>
<b class="tk" style="left:872px;top:217px;width:3px"></b>
<b class="tk" style="left:872px;top:235px;width:3px"></b>
<b class="tk" style="left:872px;top:253px;width:3px"></b>
<span style="top:174.19px;font-size:11px;color:#111;left:862.0px;transform:translateX(-50%);">0</span>
<span style="top:192.19px;font-size:11px;color:#111;left:862.0px;transform:translateX(-50%);">-10</span>
<span style="top:210.19px;font-size:11px;color:#111;left:862.0px;transform:translateX(-50%);">-20</span>
<span style="top:228.19px;font-size:11px;color:#111;left:862.0px;transform:translateX(-50%);">-30</span>
<span style="top:246.19px;font-size:11px;color:#111;left:862.0px;transform:translateX(-50%);">-50</span>
<span style="top:261.85px;font-size:12px;font-weight:bold;letter-spacing:0.009px;left:837.5px;transform:translateX(-50%);">L</span>
<span style="top:261.85px;font-size:12px;font-weight:bold;letter-spacing:0.009px;left:887.0px;transform:translateX(-50%);">R</span>
<span style="top:142.85px;font-size:12px;font-weight:bold;letter-spacing:-0.113px;left:947.6px;">Modulation</span>
<span style="top:159.85px;font-size:12px;color:#111;letter-spacing:0.330px;left:949.5px;transform:translateX(-50%);">98.8</span>
<span style="top:159.85px;font-size:12px;color:#111;letter-spacing:0.330px;left:1013.5px;transform:translateX(-50%);">6.2</span>
<div class="mt" style="left:938px;top:181px"><i style="top:1px;background:#20ff20"></i><i style="top:4px;background:#0f5010"></i><i style="top:7px;background:#0f5010"></i><i style="top:10px;background:#0f5010"></i><i style="top:13px;background:#0f5010"></i><i style="top:16px;background:#20ff20"></i><i style="top:19px;background:#20ff20"></i><i style="top:22px;background:#20ff20"></i><i style="top:25px;background:#20ff20"></i><i style="top:28px;background:#20ff20"></i><i style="top:31px;background:#20ff20"></i><i style="top:34px;background:#20ff20"></i><i style="top:37px;background:#20ff20"></i><i style="top:40px;background:#20ff20"></i><i style="top:43px;background:#20ff20"></i><i style="top:46px;background:#20ff20"></i><i style="top:49px;background:#20ff20"></i><i style="top:52px;background:#20ff20"></i><i style="top:55px;background:#20ff20"></i><i style="top:58px;background:#20ff20"></i><i style="top:61px;background:#20ff20"></i><i style="top:64px;background:#20ff20"></i><i style="top:67px;background:#20ff20"></i><i style="top:70px;background:#20ff20"></i><i style="top:73px;background:#20ff20"></i><i style="top:76px;background:#20ff20"></i><i style="top:79px;background:#20ff20"></i></div>
<div class="mt" style="left:1002px;top:181px"><i style="top:1px;background:#0f5010"></i><i style="top:4px;background:#0f5010"></i><i style="top:7px;background:#0f5010"></i><i style="top:10px;background:#0f5010"></i><i style="top:13px;background:#0f5010"></i><i style="top:16px;background:#0f5010"></i><i style="top:19px;background:#0f5010"></i><i style="top:22px;background:#20ff20"></i><i style="top:25px;background:#20ff20"></i><i style="top:28px;background:#20ff20"></i><i style="top:31px;background:#20ff20"></i><i style="top:34px;background:#20ff20"></i><i style="top:37px;background:#20ff20"></i><i style="top:40px;background:#20ff20"></i><i style="top:43px;background:#20ff20"></i><i style="top:46px;background:#20ff20"></i><i style="top:49px;background:#20ff20"></i><i style="top:52px;background:#20ff20"></i><i style="top:55px;background:#20ff20"></i><i style="top:58px;background:#20ff20"></i><i style="top:61px;background:#20ff20"></i><i style="top:64px;background:#20ff20"></i><i style="top:67px;background:#20ff20"></i><i style="top:70px;background:#20ff20"></i><i style="top:73px;background:#20ff20"></i><i style="top:76px;background:#20ff20"></i><i style="top:79px;background:#20ff20"></i></div>
<b class="tk" style="left:959px;top:181px;width:6px"></b>
<b class="tk" style="left:959px;top:197px;width:6px"></b>
<b class="tk" style="left:959px;top:213px;width:6px"></b>
<b class="tk" style="left:959px;top:230px;width:6px"></b>
<b class="tk" style="left:959px;top:246px;width:6px"></b>
<b class="tk" style="left:959px;top:262px;width:6px"></b>
<span style="top:174.19px;font-size:11px;color:#111;left:969.0px;">100</span>
<span style="top:190.19px;font-size:11px;color:#111;left:969.0px;">80</span>
<span style="top:206.19px;font-size:11px;color:#111;left:969.0px;">60</span>
<span style="top:223.19px;font-size:11px;color:#111;left:969.0px;">40</span>
<span style="top:239.19px;font-size:11px;color:#111;left:969.0px;">20</span>
<span style="top:255.19px;font-size:11px;color:#111;left:969.0px;">0</span>
<b class="tk" style="left:1023px;top:181px;width:6px"></b>
<b class="tk" style="left:1023px;top:197px;width:6px"></b>
<b class="tk" style="left:1023px;top:213px;width:6px"></b>
<b class="tk" style="left:1023px;top:230px;width:6px"></b>
<b class="tk" style="left:1023px;top:246px;width:6px"></b>
<b class="tk" style="left:1023px;top:262px;width:6px"></b>
<span style="top:174.19px;font-size:11px;color:#111;left:1033.0px;">12</span>
<span style="top:190.19px;font-size:11px;color:#111;left:1033.0px;">8</span>
<span style="top:206.19px;font-size:11px;color:#111;left:1033.0px;">4</span>
<span style="top:223.19px;font-size:11px;color:#111;left:1033.0px;">0</span>
<span style="top:239.19px;font-size:11px;color:#111;left:1033.0px;">-4</span>
<span style="top:255.19px;font-size:11px;color:#111;left:1033.0px;">-8</span>
<span style="top:261.85px;font-size:12px;font-weight:bold;letter-spacing:0.009px;left:947.5px;transform:translateX(-50%);">%</span>
<span style="top:261.85px;font-size:12px;font-weight:bold;letter-spacing:0.009px;left:1011.5px;transform:translateX(-50%);">dBr</span>
<div class="nv" style="left:1089px;top:261px"></div>
<span style="top:264.33px;font-size:13.5px;color:#1600f8;letter-spacing:-0.007px;left:1143.5px;transform:translateX(-50%);">Status</span>
<div class="nv" style="left:1089px;top:291px"></div>
<span style="top:294.33px;font-size:13.5px;color:#1600f8;letter-spacing:-0.007px;left:1143.5px;transform:translateX(-50%);">Settings</span>
<div class="nv" style="left:1089px;top:321px"></div>
<span style="top:324.33px;font-size:13.5px;color:#1600f8;letter-spacing:-0.007px;left:1143.5px;transform:translateX(-50%);">Presets</span>
<div class="nv" style="left:1089px;top:351px"></div>
<span style="top:354.33px;font-size:13.5px;color:#1600f8;letter-spacing:-0.007px;left:1143.5px;transform:translateX(-50%);">Input</span>
<div class="nv" style="left:1089px;top:381px"></div>
<span style="top:384.33px;font-size:13.5px;color:#1600f8;letter-spacing:-0.007px;left:1143.5px;transform:translateX(-50%);">AGC</span>
<div class="nv" style="left:1089px;top:411px"></div>
<span style="top:414.33px;font-size:13.5px;color:#1600f8;letter-spacing:-0.007px;left:1143.5px;transform:translateX(-50%);">Multiband 1</span>
<div class="nv" style="left:1089px;top:441px"></div>
<span style="top:444.33px;font-size:13.5px;color:#1600f8;letter-spacing:-0.007px;left:1143.5px;transform:translateX(-50%);">Multiband 2</span>
<div class="nv" style="left:1089px;top:471px"></div>
<span style="top:474.33px;font-size:13.5px;color:#1600f8;letter-spacing:-0.007px;left:1143.5px;transform:translateX(-50%);">Final Limiter</span>
<div class="nv" style="left:1089px;top:501px"></div>
<span style="top:504.33px;font-size:13.5px;color:#1600f8;letter-spacing:-0.007px;left:1143.5px;transform:translateX(-50%);">Basic RDS</span>
<div class="nv" style="left:1089px;top:531px"></div>
<span style="top:534.33px;font-size:13.5px;color:#1600f8;letter-spacing:-0.007px;left:1143.5px;transform:translateX(-50%);">Dynamic RDS</span>
<div class="pn" style="left:47px;top:286px;width:1039px;height:410px"></div>
<div class="tab" style="left:1085px;top:561px;width:114px;height:28px"></div>
<span style="top:565.00px;font-size:13px;font-weight:bold;color:#1600f8;letter-spacing:0.407px;left:1142.2px;transform:translateX(-50%);">Output</span>
<div class="fs" style="left:58px;top:301px;width:332px;height:194px"></div>
<div class="lg" style="left:68px;top:299px;width:74px"></div>
<span style="top:289.33px;font-size:13.5px;color:#1600f8;letter-spacing:-0.115px;left:73.6px;">Digital Out</span>
<div class="fs" style="left:58px;top:509px;width:332px;height:64px"></div>
<div class="lg" style="left:68px;top:507px;width:78px"></div>
<span style="top:497.33px;font-size:13.5px;color:#1600f8;letter-spacing:0.066px;left:73.6px;">Analog Out</span>
<div class="fs" style="left:400px;top:301px;width:332px;height:90px"></div>
<div class="lg" style="left:410px;top:299px;width:149px"></div>
<span style="top:289.33px;font-size:13.5px;color:#1600f8;letter-spacing:0.136px;left:415.6px;">MPX Pilot Adjustments</span>
<div class="fs" style="left:400px;top:405px;width:332px;height:90px"></div>
<div class="lg" style="left:410px;top:403px;width:90px"></div>
<span style="top:393.33px;font-size:13.5px;color:#1600f8;letter-spacing:0.043px;left:415.6px;">RDS Encoder</span>
<div class="fs" style="left:400px;top:509px;width:332px;height:64px"></div>
<div class="lg" style="left:410px;top:507px;width:110px"></div>
<span style="top:497.33px;font-size:13.5px;color:#1600f8;letter-spacing:0.010px;left:415.6px;">Headphones out</span>
<div class="fs" style="left:742px;top:301px;width:332px;height:90px"></div>
<div class="lg" style="left:752px;top:299px;width:75px"></div>
<span style="top:289.33px;font-size:13.5px;color:#1600f8;letter-spacing:0.114px;left:757.6px;">MPX Out 1</span>
<div class="fs" style="left:742px;top:405px;width:332px;height:90px"></div>
<div class="lg" style="left:752px;top:403px;width:75px"></div>
<span style="top:393.33px;font-size:13.5px;color:#1600f8;letter-spacing:0.114px;left:757.6px;">MPX Out 2</span>
<div class="fs" style="left:742px;top:509px;width:332px;height:64px"></div>
<div class="lg" style="left:752px;top:507px;width:82px"></div>
<span style="top:497.33px;font-size:13.5px;color:#1600f8;letter-spacing:-0.006px;left:757.6px;">MPX Limiter</span>
<span style="top:310.33px;font-size:13.5px;letter-spacing:-0.155px;left:64.0px;">Enable:</span>
<div class="bt" style="left:161px;top:309px;width:92px;height:22px"><u style="background:#b00000"></u></div>
<span style="top:309.33px;font-size:13.5px;letter-spacing:-0.007px;left:212.5px;transform:translateX(-50%);">Enabled</span>
<div class="bt" style="left:257px;top:309px;width:92px;height:22px"><u style="background:#0aff0a"></u></div>
<span style="top:309.33px;font-size:13.5px;letter-spacing:-0.007px;left:308.5px;transform:translateX(-50%);">Disabled</span>
<span style="top:336.33px;font-size:13.5px;letter-spacing:-0.190px;left:64.0px;">Level:</span>
<div class="sl" style="left:161px;top:341px"></div>
<div class="sh" style="left:290px;top:338px"></div>
<div class="ib" style="left:303px;top:337px"></div>
<span style="top:336.50px;font-size:13px;color:#111;left:347.5px;transform:translateX(-100%);">0.0</span>
<span style="top:336.33px;font-size:13.5px;letter-spacing:-0.007px;left:355.3px;">dBFS</span>
<span style="top:362.33px;font-size:13.5px;letter-spacing:-0.125px;left:64.0px;">De-emphasis:</span>
<div class="bt" style="left:161px;top:361px;width:188px;height:22px"><s></s></div>
<span style="top:361.33px;font-size:13.5px;letter-spacing:-0.007px;left:249.0px;transform:translateX(-50%);">Auto</span>
<span style="top:388.33px;font-size:13.5px;letter-spacing:-0.098px;left:64.0px;">Sample rate:</span>
<div class="bt" style="left:161px;top:387px;width:188px;height:22px"><s></s></div>
<span style="top:387.33px;font-size:13.5px;letter-spacing:-0.007px;left:249.0px;transform:translateX(-50%);">48 kHz</span>
<span style="top:414.33px;font-size:13.5px;letter-spacing:0.044px;left:64.0px;">Sync loss s.r.:</span>
<div class="bt" style="left:161px;top:413px;width:188px;height:22px"><s></s></div>
<span style="top:413.33px;font-size:13.5px;letter-spacing:-0.007px;left:249.0px;transform:translateX(-50%);">48 kHz</span>
<span style="top:440.33px;font-size:13.5px;letter-spacing:0.142px;left:64.0px;">Sync tout:</span>
<div class="sl" style="left:161px;top:445px"></div>
<div class="sh" style="left:158px;top:442px"></div>
<div class="ib" style="left:303px;top:441px"></div>
<span style="top:440.50px;font-size:13px;color:#111;left:347.5px;transform:translateX(-100%);">00:05</span>
<span style="top:440.33px;font-size:13.5px;letter-spacing:-0.007px;left:355.3px;">min</span>
<span style="top:518.33px;font-size:13.5px;letter-spacing:-0.190px;left:64.0px;">Level:</span>
<div class="sl" style="left:161px;top:523px"></div>
<div class="sh" style="left:202px;top:520px"></div>
<div class="ib" style="left:303px;top:519px"></div>
<span style="top:518.50px;font-size:13px;color:#111;left:347.5px;transform:translateX(-100%);">0.0</span>
<span style="top:518.33px;font-size:13.5px;letter-spacing:-0.007px;left:355.3px;">dBu</span>
<span style="top:544.33px;font-size:13.5px;letter-spacing:-0.125px;left:64.0px;">De-emphasis:</span>
<div class="bt" style="left:161px;top:543px;width:188px;height:22px"><s></s></div>
<span style="top:543.33px;font-size:13.5px;letter-spacing:-0.007px;left:249.0px;transform:translateX(-50%);">Auto</span>
<span style="top:310.33px;font-size:13.5px;letter-spacing:0.085px;left:406.0px;">Pilot Enable:</span>
<div class="bt" style="left:503px;top:309px;width:92px;height:22px"><u style="background:#0aff0a"></u></div>
<span style="top:309.33px;font-size:13.5px;letter-spacing:-0.007px;left:554.5px;transform:translateX(-50%);">Enabled</span>
<div class="bt" style="left:599px;top:309px;width:92px;height:22px"><u style="background:#b00000"></u></div>
<span style="top:309.33px;font-size:13.5px;letter-spacing:-0.007px;left:650.5px;transform:translateX(-50%);">Disabled</span>
<span style="top:336.33px;font-size:13.5px;letter-spacing:-0.079px;left:406.0px;">Pilot Level:</span>
<div class="sl" style="left:503px;top:341px"></div>
<div class="sh" style="left:579px;top:338px"></div>
<div class="ib" style="left:645px;top:337px"></div>
<span style="top:336.50px;font-size:13px;color:#111;left:689.5px;transform:translateX(-100%);">9.0</span>
<span style="top:336.33px;font-size:13.5px;letter-spacing:-0.007px;left:697.7px;">%</span>
<span style="top:362.33px;font-size:13.5px;letter-spacing:0.093px;left:406.0px;">Pilot Phase:</span>
<div class="sl" style="left:503px;top:367px"></div>
<div class="sh" style="left:566px;top:364px"></div>
<div class="ib" style="left:645px;top:363px"></div>
<span style="top:362.50px;font-size:13px;color:#111;left:689.5px;transform:translateX(-100%);">0.0</span>
<span style="top:362.33px;font-size:13.5px;letter-spacing:-0.007px;left:697.7px;">deg</span>
<span style="top:427.33px;font-size:13.5px;letter-spacing:-0.126px;left:406.0px;">Enable:</span>
<div class="bt" style="left:503px;top:426px;width:92px;height:22px"><u style="background:#b00000"></u></div>
<span style="top:426.33px;font-size:13.5px;letter-spacing:-0.007px;left:554.5px;transform:translateX(-50%);">Enabled</span>
<div class="bt" style="left:599px;top:426px;width:92px;height:22px"><u style="background:#0aff0a"></u></div>
<span style="top:426.33px;font-size:13.5px;letter-spacing:-0.007px;left:650.5px;transform:translateX(-50%);">Disabled</span>
<span style="top:453.33px;font-size:13.5px;letter-spacing:-0.130px;left:406.0px;">RDS Level:</span>
<div class="sl" style="left:503px;top:458px"></div>
<div class="sh" style="left:533px;top:455px"></div>
<div class="ib" style="left:645px;top:454px"></div>
<span style="top:453.50px;font-size:13px;color:#111;left:689.5px;transform:translateX(-100%);">2.5</span>
<span style="top:453.33px;font-size:13.5px;letter-spacing:-0.007px;left:697.7px;">%</span>
<span style="top:531.33px;font-size:13.5px;letter-spacing:0.118px;left:406.0px;">Volume:</span>
<div class="sl" style="left:503px;top:536px"></div>
<div class="sh" style="left:544px;top:533px"></div>
<div class="ib" style="left:645px;top:532px"></div>
<span style="top:531.50px;font-size:13px;color:#111;left:689.5px;transform:translateX(-100%);">-20.0</span>
<span style="top:531.33px;font-size:13.5px;letter-spacing:-0.007px;left:697.7px;">dB</span>
<span style="top:323.33px;font-size:13.5px;letter-spacing:0.199px;left:748.0px;">Ouput 1:</span>
<div class="bt" style="left:845px;top:322px;width:188px;height:22px"><s></s></div>
<span style="top:322.33px;font-size:13.5px;letter-spacing:-0.007px;left:933.0px;transform:translateX(-50%);">MPX</span>
<span style="top:349.33px;font-size:13.5px;letter-spacing:-0.127px;left:748.0px;">Level 1:</span>
<div class="sl" style="left:845px;top:354px"></div>
<div class="sh" style="left:908px;top:351px"></div>
<div class="ib" style="left:987px;top:350px"></div>
<span style="top:349.50px;font-size:13px;color:#111;left:1031.5px;transform:translateX(-100%);">0.0</span>
<span style="top:349.33px;font-size:13.5px;letter-spacing:-0.007px;left:1039.3px;">dBu</span>
<span style="top:427.33px;font-size:13.5px;letter-spacing:0.199px;left:748.0px;">Ouput 2:</span>
<div class="bt" style="left:845px;top:426px;width:188px;height:22px"><s></s></div>
<span style="top:426.33px;font-size:13.5px;letter-spacing:-0.007px;left:933.0px;transform:translateX(-50%);">Pilot</span>
<span style="top:453.33px;font-size:13.5px;letter-spacing:-0.127px;left:748.0px;">Level 2:</span>
<div class="sl" style="left:845px;top:458px"></div>
<div class="sh" style="left:908px;top:455px"></div>
<div class="ib" style="left:987px;top:454px"></div>
<span style="top:453.50px;font-size:13px;color:#111;left:1031.5px;transform:translateX(-100%);">0.0</span>
<span style="top:453.33px;font-size:13.5px;letter-spacing:-0.007px;left:1039.3px;">dBu</span>
<span style="top:518.33px;font-size:13.5px;letter-spacing:-0.071px;left:748.0px;">Virtual Limiter:</span>
<div class="bt" style="left:845px;top:517px;width:92px;height:22px"><u style="background:#b00000"></u></div>
<span style="top:517.33px;font-size:13.5px;letter-spacing:-0.007px;left:896.5px;transform:translateX(-50%);">On</span>
<div class="bt" style="left:941px;top:517px;width:92px;height:22px"><u style="background:#0aff0a"></u></div>
<span style="top:517.33px;font-size:13.5px;letter-spacing:-0.007px;left:992.5px;transform:translateX(-50%);">Off</span>
<span style="top:544.33px;font-size:13.5px;letter-spacing:-0.045px;left:748.0px;">MPX Drive:</span>
<div class="sl" style="left:845px;top:549px"></div>
<div class="sh" style="left:886px;top:546px"></div>
<div class="ib" style="left:987px;top:545px"></div>
<span style="top:544.50px;font-size:13px;color:#111;left:1031.5px;transform:translateX(-100%);">0.0</span>
<span style="top:544.33px;font-size:13.5px;letter-spacing:-0.007px;left:1039.3px;">dB</span>
<div class="bt" style="left:871px;top:654px;width:96px;height:33px"></div>
<div class="bt" style="left:977px;top:654px;width:95px;height:33px"></div>
<svg style="position:absolute;left:880px;top:660px" width="180" height="24" viewBox="880 660 180 24"><defs><linearGradient id="ag0" gradientUnits="userSpaceOnUse" x1="-9" y1="-6" x2="6" y2="6"><stop offset="0" stop-color="#4c8ada"/><stop offset="1" stop-color="#1a44a4"/></linearGradient></defs><g transform="translate(901.5,672.7)" fill="url(#ag0)"><path d="M-9.6,-5.9V4.1H0Z"/><path d="M-5.89,1.58A6.1,6.1 0 1 1 0.64,6.07L2.07,1.74A2.7,2.7 0 1 0 -2.61,0.70Z"/></g></svg>
<svg style="position:absolute;left:880px;top:660px" width="180" height="24" viewBox="880 660 180 24"><defs><linearGradient id="ag1" gradientUnits="userSpaceOnUse" x1="-9" y1="-6" x2="6" y2="6"><stop offset="0" stop-color="#4c8ada"/><stop offset="1" stop-color="#1a44a4"/></linearGradient></defs><g transform="translate(1041.3,672.7) scale(-1,1)" fill="url(#ag1)"><path d="M-9.6,-5.9V4.1H0Z"/><path d="M-5.89,1.58A6.1,6.1 0 1 1 0.64,6.07L2.07,1.74A2.7,2.7 0 1 0 -2.61,0.70Z"/></g></svg>
<span style="top:662.33px;font-size:13.5px;letter-spacing:0.066px;left:913.5px;">Undo</span>
<span style="top:662.33px;font-size:13.5px;letter-spacing:0.012px;left:998.5px;">Redo</span>
</div></body></html>
